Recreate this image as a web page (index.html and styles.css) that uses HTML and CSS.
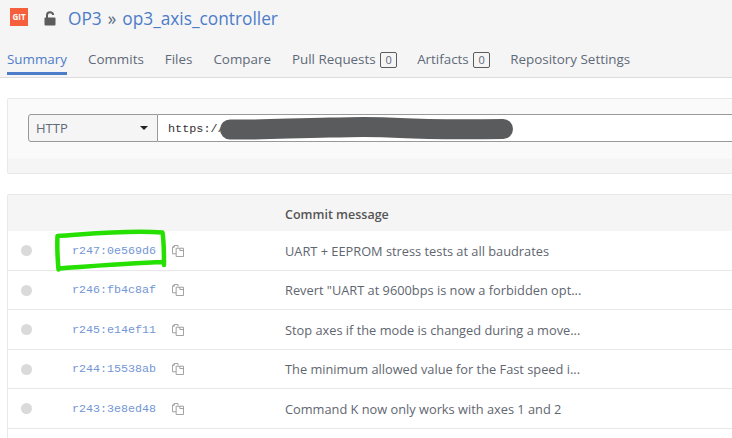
FILE: index.html
```html
<!DOCTYPE html>
<html lang="en">
<head>
    <meta charset="UTF-8">
    <title>op3_axis_controller</title>
    <link rel="stylesheet" href="styles.css">
</head>
<body>
    <div class="page">
        <div class="header">
            <div class="title-row">
                <span class="git-badge">GIT</span>
                <svg class="lock" width="12" height="15" viewBox="0 0 12 15">
                    <path d="M3 7V4.2C3 2.4 4.2 1.2 6 1.2S9 2.3 9.2 4" fill="none" stroke="#5c5c5c" stroke-width="2"/>
                    <rect x="0.5" y="6.5" width="11" height="8" rx="1" fill="#5c5c5c"/>
                </svg>
                <h1><a>OP3</a><span class="sep">»</span><a>op3_axis_controller</a></h1>
            </div>
            <div class="tabs">
                <a class="tab active">Summary</a>
                <a class="tab">Commits</a>
                <a class="tab">Files</a>
                <a class="tab">Compare</a>
                <a class="tab">Pull Requests <span class="count">0</span></a>
                <a class="tab">Artifacts <span class="count">0</span></a>
                <a class="tab">Repository Settings</a>
            </div>
        </div>

        <div class="panel clone-panel">
            <div class="clone-body">
                <div class="clone-select">
                    <span>HTTP</span>
                    <span class="caret"></span>
                </div>
                <div class="clone-url">https:/<span class="url-end">/</span></div>
            </div>
            <div class="clone-foot"></div>
        </div>

        <div class="panel commits">
            <div class="row head">
                <div class="col-status"></div>
                <div class="col-rev"></div>
                <div class="col-copy"></div>
                <div class="col-msg">Commit message</div>
            </div>
            <div class="row">
                <div class="col-status"><span class="dot"></span></div>
                <div class="col-rev"><a>r247:0e569d6</a></div>
                <div class="col-copy"><svg class="copy" width="12" height="12" viewBox="0 0 13 13"><path d="M6.5 2.500V0.500H2.500L0.500 2.500V9.500H4.500M2.500 0.500V2.500H0.500M4.500 3.500H12.500V12.500H4.500ZM8.500 3.500V6H12.500" /></svg></div>
                <div class="col-msg">UART + EEPROM stress tests at all baudrates</div>
            </div>
            <div class="row">
                <div class="col-status"><span class="dot"></span></div>
                <div class="col-rev"><a>r246:fb4c8af</a></div>
                <div class="col-copy"><svg class="copy" width="12" height="12" viewBox="0 0 13 13"><path d="M6.5 2.500V0.500H2.500L0.500 2.500V9.500H4.500M2.500 0.500V2.500H0.500M4.500 3.500H12.500V12.500H4.500ZM8.500 3.500V6H12.500" /></svg></div>
                <div class="col-msg">Revert "UART at 9600bps is now a forbidden opt...</div>
            </div>
            <div class="row">
                <div class="col-status"><span class="dot"></span></div>
                <div class="col-rev"><a>r245:e14ef11</a></div>
                <div class="col-copy"><svg class="copy" width="12" height="12" viewBox="0 0 13 13"><path d="M6.5 2.500V0.500H2.500L0.500 2.500V9.500H4.500M2.500 0.500V2.500H0.500M4.500 3.500H12.500V12.500H4.500ZM8.500 3.500V6H12.500" /></svg></div>
                <div class="col-msg">Stop axes if the mode is changed during a move...</div>
            </div>
            <div class="row">
                <div class="col-status"><span class="dot"></span></div>
                <div class="col-rev"><a>r244:15538ab</a></div>
                <div class="col-copy"><svg class="copy" width="12" height="12" viewBox="0 0 13 13"><path d="M6.5 2.500V0.500H2.500L0.500 2.500V9.500H4.500M2.500 0.500V2.500H0.500M4.500 3.500H12.500V12.500H4.500ZM8.500 3.500V6H12.500" /></svg></div>
                <div class="col-msg">The minimum allowed value for the Fast speed i...</div>
            </div>
            <div class="row">
                <div class="col-status"><span class="dot"></span></div>
                <div class="col-rev"><a>r243:3e8ed48</a></div>
                <div class="col-copy"><svg class="copy" width="12" height="12" viewBox="0 0 13 13"><path d="M6.5 2.500V0.500H2.500L0.500 2.500V9.500H4.500M2.500 0.500V2.500H0.500M4.500 3.500H12.500V12.500H4.500ZM8.500 3.500V6H12.500" /></svg></div>
                <div class="col-msg">Command K now only works with axes 1 and 2</div>
            </div>
        </div>

        <!-- hand drawn marks on top of the screenshot -->
        <svg class="marks" width="732" height="438" viewBox="0 0 732 438">
            <path class="redact" d="M230 129.500C270 130 290 128 330 127.500S370 126.500 400 128S460 129.500 503 129" />
            <path class="circle" d="M58.500 269.500C57.500 258 57 246 57.500 236C90 234 125 230 162.500 232.500C164 242 164 252 164 265M164 262C130 263 92 266 58.500 268.500" />
        </svg>
    </div>
</body>
</html>
```

FILE: styles.css
```css
html, body {
    margin: 0;
    padding: 0;
    height: 100%;
    overflow: hidden;
}
body {
    font-family: "Open Sans", Arial, sans-serif;
    font-size: 13px;
    color: #5c5c5c;
    background-color: #fff;
}
.page {
    position: relative;
    width: 732px;
    height: 438px;
    overflow: hidden;
}
.marks {
    position: absolute;
    left: 0;
    top: 0;
    pointer-events: none;
}
.redact {
    fill: none;
    stroke: #5a5b5c;
    stroke-width: 20px;
    stroke-linecap: round;
}
.circle {
    fill: none;
    stroke: #25e000;
    stroke-width: 4.500px;
    stroke-linecap: round;
    stroke-linejoin: round;
}

/* header */
.header {
    height: 77px;
    background-color: #f5f5f5;
    border-bottom: 1px solid #ddd;
}
.title-row {
    display: flex;
    align-items: center;
    height: 36px;
    padding-left: 10px;
}
.git-badge {
    width: 18px;
    height: 18px;
    margin-top: -2px;
    background-color: #f55f3c;
    color: #fff;
    font-size: 8px;
    font-weight: bold;
    line-height: 18px;
    text-align: center;
}
.lock {
    margin-left: 16px;
    margin-top: 1px;
}
h1 {
    margin: 0 0 0 12px;
    font-size: 17.300px;
    font-weight: normal;
    color: #4d7cc9;
    white-space: nowrap;
}
.sep {
    margin: 0 6px;
    color: #5c6b80;
}
.tabs {
    display: flex;
    gap: 21px;
    margin-top: 5px;
    padding-left: 7px;
}
.tab {
    height: 31px;
    line-height: 36px;
    font-size: 13.400px;
    color: #5f6a78;
    white-space: nowrap;
}
.tab.active {
    color: #4d7cc9;
    border-bottom: 3px solid #4d7cc9;
}
.count {
    display: inline-block;
    width: 15px;
    height: 14px;
    margin-left: 1px;
    margin-right: -1px;
    border: 1px solid #5c5c5c;
    border-radius: 2px;
    font-size: 11px;
    line-height: 14px;
    text-align: center;
}

/* panels */
.panel {
    width: 800px;
    margin-left: 7px;
    border: 1px solid #e8e8e8;
    border-radius: 2px;
}
.clone-panel {
    margin-top: 20px;
    height: 74px;
    background-color: #fafafa;
}
.clone-body {
    display: flex;
    height: 60px;
    padding: 15px 0 0 20px;
    box-sizing: border-box;
}
.clone-select {
    display: flex;
    align-items: center;
    justify-content: space-between;
    width: 130px;
    height: 28px;
    padding: 0 9px 0 7px;
    box-sizing: border-box;
    background-color: #f5f5f5;
    border: 1px solid #999;
    border-radius: 3px 0 0 3px;
    color: #5f6a78;
    font-size: 13px;
}
.caret {
    width: 0;
    height: 0;
    border-left: 4px solid transparent;
    border-right: 4px solid transparent;
    border-top: 4px solid #222;
}
.clone-url {
    flex: 1;
    height: 28px;
    padding-left: 10px;
    box-sizing: border-box;
    background-color: #fff;
    border: 1px solid #999;
    border-left: none;
    font-family: "Liberation Mono", monospace;
    font-size: 11.800px;
    line-height: 28px;
    color: #333;
}
.clone-foot {
    height: 14px;
    background-color: #f5f5f5;
}
.commits {
    margin-top: 20px;
    height: 300px;
}
.row {
    display: flex;
    align-items: center;
    height: 39.500px;
    box-sizing: border-box;
    border-bottom: 1px solid #e8e8e8;
}
.row.head {
    height: 36.300px;
    padding-top: 3px;
    background-color: #f5f5f5;
    border-bottom: none;
    font-weight: 600;
}
.col-status {
    width: 64px;
    padding-left: 13px;
    box-sizing: border-box;
}
.dot {
    display: block;
    width: 11px;
    height: 11px;
    border-radius: 50%;
    background-color: #dbdada;
}
.col-rev {
    width: 99px;
    font-family: "Liberation Mono", monospace;
    font-size: 11.670px;
    color: #7396d4;
}
.col-copy {
    display: flex;
    width: 114px;
}
.copy {
    fill: none;
    stroke: #999;
    stroke-width: 1;
    margin-left: 1px;
}
.col-msg {
    font-size: 12.800px;
    color: #5f6670;
    white-space: nowrap;
}
.head .col-msg {
    font-size: 12.500px;
    color: #555;
}
```
